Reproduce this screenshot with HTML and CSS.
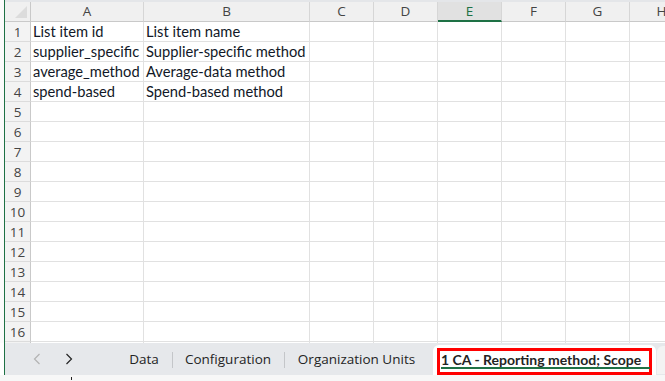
FILE: index.html
```html
<!DOCTYPE html>
<html lang="en">
  <head>
    <meta charset="UTF-8" />
    <meta name="viewport" content="width=device-width, initial-scale=1.0" />
    <title>Sheet - 1 CA - Reporting method; Scope</title>
    <link rel="stylesheet" href="styles.css">
  </head>
  <body>
    <div class="app">
      <div class="workspace">
        <div class="gutter"></div>
        <div class="sheet">
          <div class="top-strip"></div>
          <div class="grid" id="grid">
            <div class="corner"><span class="corner-mark"></span></div>
            <div class="col-head">A</div>
            <div class="col-head">B</div>
            <div class="col-head">C</div>
            <div class="col-head">D</div>
            <div class="col-head selected">E</div>
            <div class="col-head">F</div>
            <div class="col-head">G</div>
            <div class="col-head">H</div>
          </div>
        </div>
      </div>

      <div class="tabbar">
        <div class="nav-btn disabled">
          <svg width="8" height="12" viewBox="0 0 8 12"><path d="M6.5 1 L1.5 6 L6.5 11" fill="none" stroke="currentColor" stroke-width="1.2"/></svg>
        </div>
        <div class="nav-btn">
          <svg width="8" height="12" viewBox="0 0 8 12"><path d="M1.5 1 L6.5 6 L1.5 11" fill="none" stroke="currentColor" stroke-width="1.2"/></svg>
        </div>
        <div class="tabs">
          <div class="tab tab-data">Data</div>
          <div class="tab tab-config">Configuration</div>
          <div class="tab tab-org">Organization Units</div>
          <div class="tab-active">
            <div class="highlight">
              <span class="tab-label">1 CA - Reporting method; Scope</span>
            </div>
          </div>
          <div class="tab-next"></div>
        </div>
      </div>

      <div class="statusbar"><span class="status-mark"></span></div>
    </div>

    <script>
      const rows = [
        ["List item id", "List item name"],
        ["supplier_specific", "Supplier-specific method"],
        ["average_method", "Average-data method"],
        ["spend-based", "Spend-based method"]
      ];
      const grid = document.getElementById("grid");

      // 17 lignes (la derniere est presque entierement cachee par les onglets)
      for (let r = 0; r < 17; r++) {
        const num = document.createElement("div");
        num.className = "row-head";
        num.textContent = r < 16 ? r + 1 : "";
        grid.appendChild(num);
        for (let c = 0; c < 8; c++) {
          const cell = document.createElement("div");
          cell.className = "cell";
          cell.textContent = (rows[r] && rows[r][c]) || "";
          grid.appendChild(cell);
        }
      }
    </script>
  </body>
</html>
```

FILE: styles.css
```css
* {
  margin: 0;
  padding: 0;
  box-sizing: border-box;
}

body {
  width: 665px;
  height: 381px;
  overflow: hidden;
  background-color: #ffffff;
  font-family: "Lato", "Open Sans", sans-serif;
}

.app {
  display: flex;
  flex-direction: column;
  height: 381px;
}

.workspace {
  display: flex;
  height: 343px;
  flex-shrink: 0;
  overflow: hidden;
}

.gutter {
  width: 5px;
  flex-shrink: 0;
  background-color: #fbfbfb;
  border-right: 1px solid #1e7145;
}

.sheet {
  flex: 1;
  overflow: hidden;
}

.top-strip {
  height: 2px;
  background-color: #e4e6e9;
}

.grid {
  display: grid;
  grid-template-columns: 26px 113px 166px 64px 64px 64px 64px 64px 64px;
  grid-auto-rows: 20px;
}

.corner {
  position: relative;
  background-color: #f0f0f0;
  border-right: 1px solid #c9c9c9;
  border-bottom: 1px solid #c9c9c9;
}

.corner-mark {
  position: absolute;
  right: 3px;
  bottom: 3px;
  width: 0;
  height: 0;
  border-left: 12px solid transparent;
  border-bottom: 12px solid #dcdcdc;
}

.col-head {
  background-color: #f0f0f0;
  border-right: 1px solid #d6d6d6;
  border-bottom: 1px solid #c9c9c9;
  color: #444444;
  font-family: "Open Sans", sans-serif;
  font-size: 13.5px;
  line-height: 19px;
  text-align: center;
}

.col-head.selected {
  background-color: #e1e1e1;
  color: #1e7145;
  border-bottom: 2px solid #1e7145;
}

.row-head {
  background-color: #f3f3f3;
  border-right: 1px solid #c9c9c9;
  border-bottom: 1px solid #dcdcdc;
  color: #444444;
  font-family: "Open Sans", sans-serif;
  font-size: 13.5px;
  line-height: 20px;
  text-align: center;
}

.cell {
  border-right: 1px solid #e1e1e1;
  border-bottom: 1px solid #e1e1e1;
  color: #111827;
  font-size: 14.7px;
  line-height: 19px;
  padding-left: 2px;
  white-space: nowrap;
  overflow: hidden;
}

.tabbar {
  display: flex;
  align-items: stretch;
  height: 32px;
  flex-shrink: 0;
  overflow: hidden;
  background-color: #e6e8eb;
  border-left: 1px solid #1e7145;
  margin-left: 4px;
  padding-left: 20px;
  font-family: "Open Sans", sans-serif;
  font-size: 13.5px;
  color: #242424;
}

.nav-btn {
  width: 24px;
  flex-shrink: 0;
  display: flex;
  align-items: center;
  justify-content: center;
  color: #242424;
  margin-right: 8px;
}

.nav-btn.disabled {
  color: #b3b3b3;
}

.tabs {
  display: flex;
  align-items: stretch;
  flex-shrink: 0;
  margin-left: 27px;
}

.tab {
  display: flex;
  flex-shrink: 0;
  align-items: center;
  justify-content: center;
  position: relative;
}

.tab + .tab::before {
  content: "";
  position: absolute;
  left: 0;
  top: 9px;
  height: 16px;
  border-left: 1px solid #c4c6c9;
}

.tab-data {
  width: 56px;
}

.tab-config {
  width: 112px;
}

.tab-org {
  width: 145px;
}

.tab-active {
  width: 223px;
  flex-shrink: 0;
  margin-left: 4px;
  margin-top: 2px;
  background-color: #ffffff;
  border-radius: 6px 6px 0 0;
  padding: 3px 4px 0 4px;
}

.highlight {
  height: 27px;
  width: 215px;
  border: 3px solid #ff0000;
  padding: 1px 0 0 1px;
}

.tab-label {
  display: block;
  font-family: "Lato", "Open Sans", sans-serif;
  font-size: 14px;
  font-weight: 700;
  color: #242424;
  border-bottom: 2px solid #1e7145;
  line-height: 15px;
  width: 209px;
  white-space: nowrap;
  overflow: hidden;
}

.tab-next {
  width: 12px;
  flex-shrink: 0;
  margin-left: 1px;
  margin-top: 3px;
  margin-bottom: 1px;
  background-color: #f3f3f3;
  border-radius: 6px 0 0 0;
}

.statusbar {
  position: relative;
  flex: 1;
  background-color: #f7f7f7;
}

.status-mark {
  position: absolute;
  left: 71px;
  top: 2px;
  width: 1px;
  height: 3px;
  background-color: #222222;
}
```
